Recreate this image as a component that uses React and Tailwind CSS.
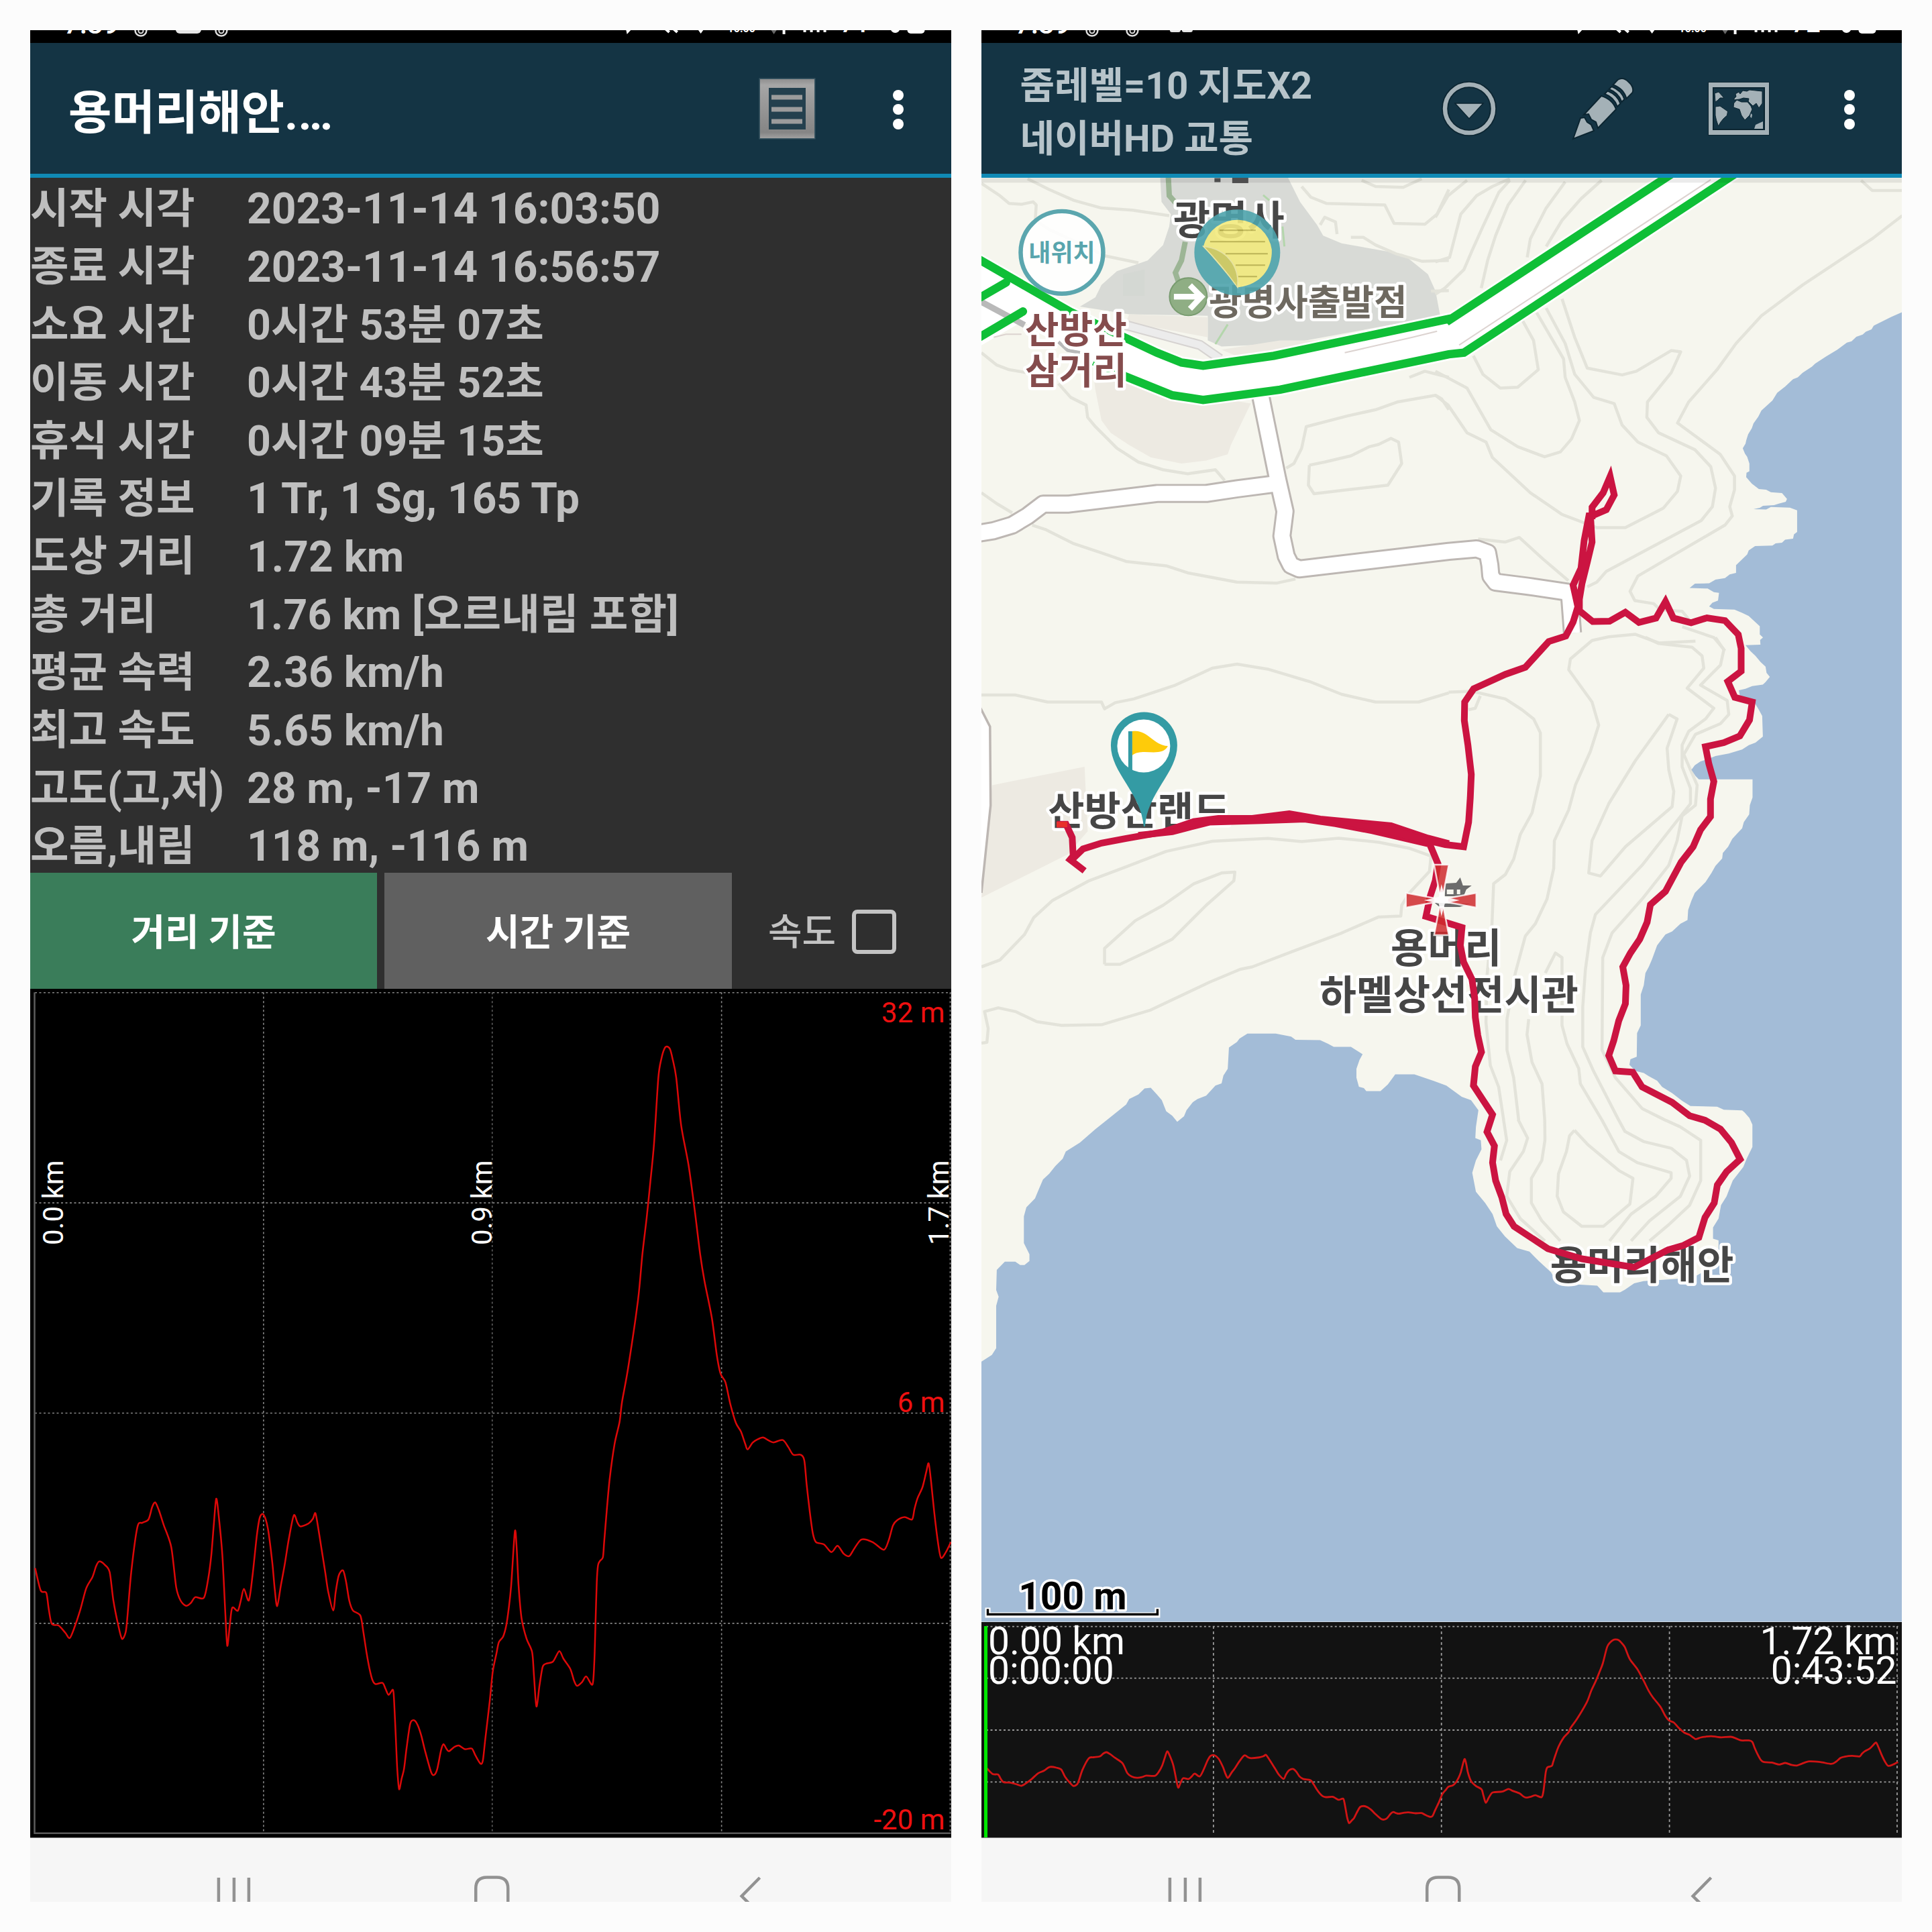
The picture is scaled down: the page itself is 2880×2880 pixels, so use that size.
import React from 'react';

const FONT = "font-['Roboto','Noto_Sans_CJK_KR',sans-serif]";

const stats = [
  { label: '시작 시각', value: '2023-11-14 16:03:50' },
  { label: '종료 시각', value: '2023-11-14 16:56:57' },
  { label: '소요 시간', value: '0시간 53분 07초' },
  { label: '이동 시간', value: '0시간 43분 52초' },
  { label: '휴식 시간', value: '0시간 09분 15초' },
  { label: '기록 정보', value: '1 Tr, 1 Sg, 165 Tp' },
  { label: '도상 거리', value: '1.72 km' },
  { label: '총 거리', value: '1.76 km [오르내림 포함]' },
  { label: '평균 속력', value: '2.36 km/h' },
  { label: '최고 속도', value: '5.65 km/h' },
  { label: '고도(고,저)', value: '28 m, -17 m' },
  { label: '오름,내림', value: '118 m, -116 m' },
];

// Elevation profile: x runs 56..1543 over the distance, y runs -1248 (32 m) to 1273 (-20 m)
const profile = `57,478 66,545 75,552 79,600 84,645 95,650 106,672 113,688 120,660 130,605 140,538 150,505 156,472 161,458
170,468 178,490 184,575 192,650 198,690 204,670 207,620 213,490 223,355 231,342 241,332 247,295 252,281 258,305 266,350
278,415 286,535 293,575 302,591 310,582 317,565 331,567 338,510 343,440 347,350 351,270 355,320 361,440 366,620 369,711
373,650 377,597 386,606 391,575 396,540 404,575 410,500 417,380 422,325 428,318 435,360 442,460 446,540 450,592 456,530
462,470 469,390 477,320 483,342 488,353 501,344 508,330 512,313 516,350 522,420 528,490 533,550 541,605 545,550 550,500
557,485 562,520 567,575 573,605 585,620 590,670 595,730 600,780 605,815 610,826 621,822 626,840 631,858 638,843 640,880
643,1000 645,1080 648,1141 652,1110 656,1080 660,1020 666,945 672,934 678,948 684,980 690,1025 700,1090 705,1098 710,1080
716,1025 720,1006 725,1020 729,1027 738,1014 745,1010 755,1021 766,1019 772,1040 780,1064 784,1055 788,990 795,880 800,790
806,735 810,700 817,683 822,650 826,600 830,530 836,368 839,420 842,530 847,630 855,690 864,730 867,800 871,893 876,830
881,775 886,765 898,758 908,727 915,750 926,780 932,815 937,831 945,820 952,803 962,827 965,760 967,640 969,520 971,470
974,457 979,445 981,400 985,310 990,210 998,105 1006,40 1010,-20 1020,-123 1036,-326 1043,-462 1050,-572 1056,-680
1062,-795 1069,-993 1074,-1050 1079,-1080 1083,-1086 1088,-1078 1092,-1050 1098,-993 1106,-850 1118,-731 1128,-596 1137,-462
1144,-382 1156,-271 1164,-160 1170,-105 1178,-79 1186,-13 1195,43 1203,68 1210,105 1214,122 1222,102 1230,92 1239,86
1248,95 1256,101 1271,94 1280,115 1288,138 1300,138 1306,155 1310,230 1315,310 1320,375 1325,400 1338,407 1350,430 1360,411
1370,435 1379,442 1387,420 1399,392 1417,400 1435,423 1443,395 1450,350 1457,334 1469,325 1481,332 1485,300 1490,268
1498,235 1504,190 1508,164 1512,220 1517,310 1523,400 1528,447 1536,430 1544,400`;

const toPairs = (str) => str.trim().split(/\s+/).map((p) => p.split(',').map(Number));

// Smooth curve through the profile points, scaled to the given box
const profilePath = (x0, x1, y0, y1) => {
  const pts = toPairs(profile).map(([x, y]) => [
    x0 + ((x - 56) / 1487) * (x1 - x0),
    y0 + ((y + 1248) / 2521) * (y1 - y0),
  ]);
  let d = `M${pts[0].join(' ')}`;
  for (let i = 0; i < pts.length - 1; i++) {
    const a = pts[i - 1] || pts[i];
    const b = pts[i];
    const c = pts[i + 1];
    const e = pts[i + 2] || c;
    d += `C${b[0] + (c[0] - a[0]) / 7} ${b[1] + (c[1] - a[1]) / 7} ${c[0] - (e[0] - b[0]) / 7} ${c[1] - (e[1] - b[1]) / 7} ${c[0]} ${c[1]}`;
  }
  return d;
};

// The map is digitised on five sheets, each with its own origin and grid
const sheets = {
  A: [1440, 250, 2.1778, 2.1778],
  B: [2140, 250, 2.1189, 2.1778],
  C: [1440, 950, 2.1778, 2.1778],
  D: [2100, 950, 2.0103, 2.1778],
  E: [1440, 1500, 1.0889, 3],
};

const at = (sheet, str) => {
  const [ox, oy, sx, sy] = sheets[sheet];
  return toPairs(str)
    .map(([x, y]) => `${(ox + x / sx).toFixed(1)},${(oy + y / sy).toFixed(1)}`)
    .join(' ');
};

const sea = [
  at('B', `1475,468 1440,484 1385,512 1378,524 1360,532 1350,541 1330,548 1315,563 1300,567 1270,590 1235,612 1200,635 1190,645 1160,665 1145,680 1130,686
    1105,710 1080,730 1065,755 1030,788 1020,808 1005,830 1000,845 988,865 982,885 980,895 971,910 978,928 985,938 992,960 992,985 983,990 982,1004
    1000,1025 1022,1043 1045,1045 1060,1053 1095,1056 1111,1075 1107,1084 1085,1090 1070,1095 1035,1097 1025,1104 1005,1108 1045,1109
    1060,1101 1120,1103 1143,1112 1143,1182 1133,1190 1130,1204 1105,1207 1095,1217 1075,1219 1065,1226 1010,1228 990,1242 985,1255 950,1290
    950,1315 930,1320 915,1332 885,1337 865,1349 820,1350 803,1364 860,1366 880,1378 896,1380 893,1405 875,1412 865,1424 880,1432
    945,1434 970,1445 990,1455 1025,1488 1025,1515 1035,1525 1026,1533 1027,1548`),
  at('D', `1010,25 1025,45 1040,60 1055,80 1070,95 1073,115 1083,128 1070,145 1062,153 1030,158 1010,167 990,172 993,190 1035,208
    1050,235 1060,255 1062,322 1040,342 1020,350 1000,364 960,377 920,385 905,392 875,403 858,415 848,430 860,450 870,461 1031,461
    1031,520 1023,545 1021,575 1005,600 1000,620 985,637 970,655 958,680 942,700 940,718 920,742 908,765 890,795 858,830 848,855
    838,885 836,918 815,930 790,955 770,965 745,1000 730,1045 720,1070 710,1090 705,1130 696,1160 696,1260 685,1285 684,1362
    665,1370 662,1388 680,1408 705,1415 720,1425 745,1440 760,1460 790,1480 820,1505 845,1522 925,1524 945,1534 1000,1536 1015,1550`),
  at('E', `1262,468 1272,500 1277,530 1277,630 1268,680 1262,720 1245,780 1235,850 1226,890 1222,950 1213,990 1213,1040 1222,1048
    1222,1150 1180,1215 1100,1230 1085,1240 1070,1268 1062,1280 1035,1280 1025,1250 960,1240 950,1190 930,1140 915,1098 895,1082
    875,1030 862,985 855,930 843,880 828,830 822,745 828,690 837,640 836,600 827,590 828,540 832,465 820,420 805,405 780,355 760,335
    728,305 697,305 685,350 673,380 650,380 646,366 638,360 634,320 634,280 639,240 644,215 625,182 597,182 588,168 575,152 535,150
    528,136 503,122 457,122 444,145 440,160 427,185 425,280 418,310 415,345 405,355 390,400 376,415 368,430 358,465 354,492 343,517
    335,490 325,470 318,420 310,395 300,365 290,368 280,395 265,415 260,440 235,495 210,550 185,610 162,650 157,682 145,715 135,750
    125,775 118,820 112,860 98,900 94,940 94,1060 103,1110 103,1140 95,1158 88,1158 80,1143 63,1143 50,1180 49,1270 53,1300 49,1340 49,1530 42,1560`),
  '1463,2030 1463,2418 2836,2418',
].join(' ');

const contours = [
  at('A', '50,50 110,90 140,115 180,118 218,110 228,120 225,170 270,200 400,260 450,285 560,308'),
  at('A', '200,35 270,70 350,105 440,130 540,137 660,155'),
  at('A', '50,600 100,640 140,655 200,665'),
  at('A', '300,700 340,745 390,770 395,810 420,840 490,910 560,955 640,980 720,993 810,980 840,1015'),
  at('A', '50,1055 100,1090 150,1120'),
  at('A', '215,1160 260,1175 350,1220 440,1250 520,1278 650,1292 720,1315 880,1345 1010,1348 1070,1335'),
  at('A', '1090,60 1120,95 1170,115 1360,120 1390,180 1490,183 1530,150 1568,70'),
  at('A', '1285,40 1330,60 1420,63 1480,35'),
  at('A', '1150,185 1165,160 1200,175 1205,215'),
  at('A', '1250,225 1290,225 1330,250 1400,280 1480,303 1568,300'),
  at('A', '1510,400 1568,398'),
  at('A', '1040,975 1065,960 1090,910 1105,840 1240,805 1330,785 1400,760 1525,738 1545,750 1568,785'),
  at('A', '1115,965 1165,955 1250,935 1310,905 1340,898 1380,878 1405,890 1415,960 1370,1030 1240,1045 1130,1058 1112,1030 1115,965'),
  at('A', '1440,680 1490,660 1568,680'),
  at('B', '0,160 40,90 100,40'),
  at('B', '0,305 45,290 60,230 80,150 130,90 180,60 235,35'),
  at('B', '0,410 30,390 90,330 115,270 150,190 200,80 235,40'),
  at('B', '145,390 165,300 190,220 230,120 285,40'),
  at('B', '290,290 300,230 350,130 410,45'),
  at('B', '350,255 400,170 460,100 525,40'),
  at('B', '1345,40 1380,73 1475,73'),
  at('B', `1475,155 1380,230 1160,380 1030,480 950,570 890,655 800,760 765,828 900,930 945,1000 945,1045 930,1100 938,1130
    915,1160 640,1325 615,1375 630,1405 690,1415 710,1435 780,1440 800,1465`),
  at('B', `400,425 440,550 480,650 590,672 635,660 745,593 775,597 745,665 670,760 668,810 705,860 820,915 870,970 885,1040
    875,1100 840,1145 540,1310 510,1345 480,1360`),
  at('B', `350,455 410,570 440,670 500,745 565,765 590,835 640,890 730,935 775,1000 765,1050 720,1105 600,1168 510,1168
    400,1125 300,1055 180,940 160,890 100,860 40,770 0,738`),
  at('B', '0,660 100,715 175,850 260,905 345,938 395,922 430,880 455,820 440,760 410,680 405,620 320,470'),
  at('B', '275,495 310,560 325,655 260,712 205,715 150,670 120,610'),
  at('B', '135,1205 220,1215 265,1200 340,1270 420,1340'),
  at('B', '780,1490 880,1525 915,1568'),
  at('C', `50,187 160,187 265,210 440,210 450,232 485,212 545,200 680,155 800,100 880,87 980,103 1120,145 1220,185 1330,210
    1470,210 1568,180`),
  at('C', `50,1070 110,1048 190,965 220,910 280,855 400,790 520,745 650,695 800,662 980,653 1090,663 1210,652 1340,665 1440,685
    1510,710 1505,760 1440,830 1415,870 1412,905 1340,908 1220,960 1060,1020 930,1070 890,1078 790,1120 600,1210 440,1258
    310,1260 230,1248 160,1215 105,1203 60,1215 72,1270 68,1315 50,1318`),
  at('C', '450,1062 450,1010 550,920 640,870 740,800 830,765 873,762 870,790 780,870 670,980 600,1015 500,1062 450,1062'),
  at('D', `120,178 190,175 290,200 340,235 375,265 395,310 395,450 370,570 335,640 315,720 290,770 255,800 250,930 235,1100
    232,1250 245,1390 270,1460 285,1568`) + ' ' + at('E', '873,510 878,600 868,690'),
  at('D', `860,12 750,18 680,-10 600,-2 550,10 485,70 480,105 550,210 570,285 545,370 500,480 480,560 437,660 435,750 415,850 380,930 350,970
    320,1090 295,1240 295,1340 315,1430 330,1568`) + ' ' + at('E', '897,510 912,590 905,650 883,740 878,850 900,950 940,1050'),
  at('D', `710,0 750,20 850,32 880,60 885,100 835,165 915,230 890,265 840,305 820,350 820,420 845,490 845,540 700,740 560,900
    545,960 530,1080 522,1200 522,1330 555,1410 630,1568`) + ' ' + at('E', '1060,510 1070,560 1100,605 1145,635 1170,690 1175,760 1160,850 1110,960 1080,1050'),
  at('D', `920,0 945,40 935,90 875,155 955,205 960,250 935,280 860,315 825,380 865,480 860,545 820,580 805,660 780,740 700,850
    610,960 582,1040 580,1340 620,1430 700,1530 770,1568`) + ' ' + at('E', '1136,510 1160,540 1193,600 1193,780 1175,890 1140,980 1110,1050'),
  at('D', '780,250 805,265 775,360 780,430 795,500 790,550 650,680 575,775 540,765 550,660 600,540 680,400 780,250'),
  at('D', '410,1090 440,1025 460,1040 460,1260 475,1320 510,1400 515,1450 580,1568') + ' ' + at('E', '1060,650 1090,700 1145,745 1145,770 1120,850 1080,930 1045,1050'),
  at('D', '360,1240 355,1290 370,1380 400,1450 408,1568') + ' ' + at('E', '940,600 935,690 918,770 918,880 935,960 965,1050'),
  at('D', '180,235 200,230 215,190'),
  at('E', '988,555 1010,620 1060,735 1083,770 1078,885 1035,985 1000,985 970,920 960,850 962,750 975,650 980,580 988,555'),
];

const track = [
  at('C', '295,607 325,607 345,650 348,710 338,722 385,758'),
  at('C', '348,718 380,687 440,668 520,653 640,632 740,598 820,588 930,588 1050,573 1150,590 1380,612 1500,652 1568,670'),
  at('C', '560,643 670,631 790,600 960,595 1100,590 1200,605 1320,628 1500,670'),
  [
    at('D', '-30,645 0,637 60,660 110,673 165,680 180,600 185,520 188,445 178,350 167,270 168,210 195,167 290,120 350,97'),
    at('B', `358,1538 412,1520 435,1475 450,1425 435,1355 460,1300 470,1210 485,1130 495,1130 495,1102 530,1055 552,1002 565,1062 540,1110
      490,1132 495,1215 480,1280 463,1350 455,1400 455,1438 497,1473 550,1472 600,1443 643,1476 697,1462 727,1408 752,1462
      808,1477 858,1461 915,1470 957,1515 966,1560`),
    at('D', `997,50 997,110 957,143 978,195 1030,210 1022,268 993,320 945,342 890,355 900,410 915,468 905,525 905,582 875,625
      853,680 817,730 770,825 725,868 715,925 693,980 665,1025 642,1070 652,1130 650,1190 630,1245 615,1310 600,1358
      620,1408 672,1412 700,1460 790,1510`),
    at('E', `1175,490 1200,510 1225,550 1243,610 1257,685 1235,740 1220,800 1215,880 1200,945 1190,1035 1165,1070 1140,1090
      1085,1168 1000,1130 945,1085 890,985 877,930 870,855 860,780 855,700 858,625 846,562 855,485 824,355 827,270 837,205 831,130 827,50`),
    at('D', '198,1170 190,1110 165,1055 155,1000 160,942 52,906 65,840 80,790 88,735 62,668'),
  ].join(' '),
];

// Out and back legs run side by side here
const trackOverlap = at('C', `560,643 640,632 740,598 820,588 930,588 1050,573 1150,590 1380,612 1500,652 1500,670 1320,628 1200,605
  1100,590 960,595 790,600 670,631`);

const roads = [
  at('A', '957,740 1012,1010 1036,1115 1026,1195 1040,1260 1055,1290 1082,1302 1568,1245') +
    ' ' +
    at('B', '130,1237 165,1250 172,1290 175,1325 190,1345 290,1358 420,1378 425,1400 433,1510'),
  at('A', '1012,1025 880,1042 780,1057 620,1057 330,1092 250,1092 200,1130 150,1160 90,1178 30,1188'),
];

const greenTop = at('A', '30,290 340,468 520,553 620,600 700,632 770,642 1000,610 1568,490') + ' ' + at('B', '45,493 775,0');
const greenBottom = at('A', '415,628 520,678 670,738 770,753 1020,720 1568,605') + ' ' + at('B', '90,600 975,0');
const highway =
  at('A', '30,290 340,468 520,553 620,600 700,632 770,642 1000,610 1568,490') +
  ' ' +
  at('B', '45,493 775,0 975,0 90,600') +
  ' ' +
  at('A', '1568,605 1020,720 770,753 670,738 520,678 415,628 185,475 30,565');

const RingIcon = ({ x }) => (
  <g fill="none" stroke="#ddd">
    <circle cx={x} cy="0" r="8.500" strokeWidth="2.500" />
    <circle cx={x} cy="1" r="3.500" strokeWidth="2" />
  </g>
);

const StatusBar = ({ percent, children }) => (
  <svg className="h-[19px] w-full shrink-0 bg-black" viewBox="0 0 1373 19" fill="#fff" fontFamily="Roboto">
    <text x="50" y="4.500" fontSize="42" fontWeight="500">7:39</text>
    {children}
    <path d="M888 -3l2 9 10-11z" />
    <path d="M945 -4l8 7M957 -4l8 7" stroke="#fff" strokeWidth="4" />
    <path d="M992 -6l8 11 8-11z" />
    <text x="1040" y="3" fontSize="16" fontWeight="700">10.00</text>
    <path d="M1101 -6l8 12 8-12z" fill="#666" />
    <path d="M1124 -6v12M1155 -6v9M1165 -6v9M1175 -6v9M1185 -6v9" stroke="#fff" strokeWidth="4" />
    <text x="1208" y="3" fontSize="38" fontWeight="500">{percent}</text>
    <circle cx="1290" cy="-3" r="7" />
    <rect x="1308" y="-10" width="26" height="15" rx="5" />
  </svg>
);

const MoreDots = () => (
  <div className="flex w-4 flex-col gap-[5.5px]">
    <span className="h-4 w-4 rounded-full bg-white" />
    <span className="h-4 w-4 rounded-full bg-white" />
    <span className="h-4 w-4 rounded-full bg-white" />
  </div>
);

const NavBar = () => (
  <svg className="w-full flex-1 border-t border-[#888] bg-[#f6f6f6]" viewBox="0 2739 1373 96" preserveAspectRatio="xMidYMin slice" fill="none" stroke="#929292" strokeWidth="4.5">
    <path d="M281 2798v50M304 2798v50M326 2798v50" />
    <path d="M664.500 2850v-36q0 -16.500 16.500 -16.500h15q16.500 0 16.500 16.500v36" />
    <path d="M1088 2798l-27 27.500 24 24" />
  </svg>
);

const ListIcon = () => (
  <svg width="85" height="92" viewBox="0 0 85 92">
    <defs>
      <linearGradient id="frame" x1="0" y1="0" x2="0" y2="1">
        <stop offset="0" stopColor="#8f8f8f" />
        <stop offset="0.1" stopColor="#a6a6a6" />
        <stop offset="0.9" stopColor="#858585" />
        <stop offset="1" stopColor="#a0a0a0" />
      </linearGradient>
    </defs>
    <rect x="0.500" y="0.500" width="84" height="91" fill="#3a5663" />
    <rect x="2" y="2" width="81" height="88" fill="url(#frame)" />
    <rect x="15" y="15" width="55" height="62" fill="#24404e" />
    <path d="M19 29h46M19 47h46M19 65h46" stroke="#9c9c9c" strokeWidth="7" />
  </svg>
);

const DropIcon = () => (
  <svg width="82" height="82" viewBox="0 0 82 82">
    <circle cx="41" cy="41" r="36" fill="none" stroke="#0c2531" strokeWidth="10" />
    <circle cx="41" cy="41" r="36" fill="none" stroke="#a4b1b7" strokeWidth="6.500" />
    <path d="M20 33h42l-21 23z" fill="#a4b1b7" stroke="#0c2531" strokeWidth="1.500" />
  </svg>
);

const PencilIcon = () => (
  <svg width="96" height="98" viewBox="-1 -1 96 98" fill="#a4b1b7" stroke="#0c2531" strokeWidth="2">
    <path d="M3 93L14 62l6 -1 4 7 6 4 4 9z" />
    <path d="M19 57L45 29q17 5 22 20L40 77l-3 -9 -7 -4 -4 -8z" />
    <path d="M50 26l4.500 -4.500q15 6 19 19l-4.500 4.500q-5 -14 -19 -19z" />
    <path d="M56.500 19l4 -4q15 6 19 19l-4 4q-5 -14 -19 -19z" />
    <path d="M62.500 12.500l7 -7.500q8 -5 16 3 9 8 6 16l-9 9q-4 -15 -20 -20.500z" />
  </svg>
);

const WorldIcon = () => (
  <svg width="92" height="80" viewBox="-1 -1 92 80" fill="#a4b1b7">
    <rect x="-1" y="-1" width="92" height="80" fill="#0c2531" />
    <rect width="90" height="78" />
    <rect x="6" y="7" width="78" height="64" fill="#0c2531" />
    <rect x="8" y="9" width="74" height="60" fill="#143444" />
    <path d="M10 29L9 16l6 -2 8 9 -6 0 -4 4zM10 36l7 -1 11.500 8 -1 6 -5.500 5 -4 5 -3.500 6 -3 -9 -1.500 -7z" stroke="#0c2531" />
    <path d="M37.500 31l4.500 -5 7 3h9l5 6 2 5 -4 9 -7 7 -5 -7 -3 -9 -9 -3z" stroke="#0c2531" />
    <path d="M38 24l3 -3 -1 -4 5 -3 2 3 4 -5 6 1 4 -2 19 2v18l-5 7 -4 -7 -5 4 -7 -7 1 -4 -8 -1 -6 2 -8 1z" stroke="#0c2531" />
    <path d="M81 58v11H68l2 -6zM63 46l2 2 -1 5 -2 -2z" />
  </svg>
);

const ElevationChart = () => (
  <svg className="h-[1265px] w-full shrink-0 bg-black" viewBox="45 1474 1373 1265" fontFamily="Roboto">
    <g stroke="#858585" strokeWidth="1.600" strokeDasharray="3 3.500">
      <path d="M52 1479.500H1418M52 1793H1418M52 2106.500H1418M52 2420H1418" />
      <path d="M393 1479V2733M1076 1479V2733M1417 1479V2733" />
      <path d="M734 1479V2733" stroke="#5e5e5e" />
    </g>
    <path d="M51.500 1479V2733H1418" fill="none" stroke="#5c5c5c" strokeWidth="2.500" />
    <path d={profilePath(51.5, 1417, 1479.3, 2733)} fill="none" stroke="#dc0808" strokeWidth="2.500" strokeLinejoin="round" />
    <g fill="#ee1010" fontSize="42" textAnchor="end">
      <text x="1409" y="1524">32 m</text>
      <text x="1409" y="2105">6 m</text>
      <text x="1409" y="2727">-20 m</text>
    </g>
    <g fill="#fff" fontSize="42">
      <text transform="translate(94 1856) rotate(-90)">0.0 km</text>
      <text transform="translate(733 1856) rotate(-90)">0.9 km</text>
      <text transform="translate(1414 1856) rotate(-90)">1.7 km</text>
    </g>
  </svg>
);

const MiniChart = () => (
  <svg className="h-[321px] w-full shrink-0 bg-[#121212]" viewBox="1463 2418 1373 321" fontFamily="Roboto">
    <path d="M1470 2424.500H2830M1470 2501.500H2830M1470 2579H2830M1470 2656.500H2830" stroke="#9a9a9a" strokeWidth="1.800" strokeDasharray="3 3.500" />
    <path d="M1809 2424V2734M2149 2424V2734M2489 2424V2734M2828.500 2424V2734" stroke="#9a9a9a" strokeWidth="1.800" strokeDasharray="4 4" />
    <path d={profilePath(1470.5, 2829, 2424, 2734)} fill="none" stroke="#d01414" strokeWidth="2.800" strokeLinejoin="round" />
    <path d="M1469.500 2424V2739" stroke="#00e600" strokeWidth="5" />
    <g fill="#fff" fontSize="57">
      <text x="1473" y="2466">0.00 km</text>
      <text x="1473" y="2510">0:00:00</text>
      <text x="2828" y="2466" textAnchor="end">1.72 km</text>
      <text x="2828" y="2510" textAnchor="end">0:43:52</text>
    </g>
  </svg>
);

const TrackMap = () => (
  <svg className="h-[2153px] w-full shrink-0 bg-[#f6f6ee]" viewBox="1463 265 1373 2153" fontFamily="'Roboto','Noto Sans CJK KR',sans-serif">
    {/* Land use */}
    <polygon
      fill="#d8dad6"
      points={at('A', `630,20 1040,20 1085,110 1140,185 1160,220 1220,245 1420,280 1500,345 1525,400 1540,480 1050,570 830,580 785,560 785,480
        530,475 370,450 420,420 440,380 490,335 590,300 640,250 660,190 665,150 635,110`)}
    />
    <polygon fill="#d0d4d0" points={at('A', '510,345 580,330 580,415 510,415')} opacity="0.4" />
    <polygon fill="#edeae2" points={at('A', '415,680 420,720 440,820 470,860 530,900 600,940 700,960 780,950 850,930 860,900 925,765')} />
    <polygon fill="#edeae2" points={at('A', '530,475 785,485 785,550 520,500')} />
    <polygon fill="#edeae2" points={at('A', '830,590 1020,560 1200,560 900,620')} />
    <polygon fill="#edeae2" points={at('C', '85,480 385,420 395,630 330,705 50,845 78,545')} />

    <g fill="none" stroke="#e3e3da" strokeWidth="4.500" strokeLinejoin="round">
      {contours.map((points, idx) => (
        <polyline key={idx} points={points} />
      ))}
    </g>

    <polygon points={sea} fill="#a3bcd7" />

    {/* Footpaths */}
    <g fill="none" stroke="#9cb595" strokeWidth="8">
      <polyline points={at('A', '657,30 660,90 682,115')} />
      <polyline points={at('A', '712,240 700,300 680,340 690,370')} />
    </g>
    <g fill="none" stroke="#b4d6ac" strokeWidth="3">
      <polyline points={at('A', '850,508 810,572')} />
      <polyline points={at('A', '965,88 985,105')} />
      <polyline points={at('A', '1028,190 1034,255')} />
    </g>
    <polyline points={at('A', '500,505 760,575 825,620')} fill="none" stroke="#d6d3d1" strokeWidth="15" />
    <polyline points={at('A', '500,505 760,575 825,620')} fill="none" stroke="#ececec" strokeWidth="11" />

    {/* Roads */}
    <polyline points={at('C', '30,200 50,235 78,290 80,545 50,830')} fill="#fff" stroke="#bdb7b3" strokeWidth="3.500" />
    <g fill="none" stroke="#bdb7b3" strokeWidth="28.500" strokeLinejoin="round">
      {roads.map((points, idx) => (
        <polyline key={idx} points={points} />
      ))}
    </g>
    <g fill="none" stroke="#fff" strokeWidth="22.500" strokeLinejoin="round">
      {roads.map((points, idx) => (
        <polyline key={idx} points={points} />
      ))}
    </g>
    <polygon points={highway} fill="#fff" stroke="#fff" strokeWidth="18" strokeLinejoin="round" />
    <g fill="none" stroke="#b9b9b9" strokeWidth="9">
      <polyline points={at('A', '50,435 190,510')} />
      <polyline points={at('A', '300,565 330,592 370,600')} strokeWidth="5" />
    </g>
    <g fill="none" stroke="#dcd3d0" strokeWidth="2">
      <polyline points={at('B', '75,575 870,38')} />
      <polyline points={at('A', '1230,600 1450,550 1530,530')} />
      <polyline points={at('A', '90,550 130,540 180,540')} />
    </g>
    <g fill="none" stroke="#0fbf37" strokeWidth="12.500">
      <polyline points={greenTop} />
      <polyline points={greenBottom} />
      <polyline points={at('A', '30,430 130,372')} strokeLinecap="round" />
      <polyline points={at('A', '30,558 185,466')} strokeLinecap="round" />
    </g>

    <circle cx="1771.500" cy="442" r="28" fill="#8fae84" stroke="#789b6f" strokeWidth="2" />
    <path d="M1750 442h37M1774 425l17 17 -17 18" fill="none" stroke="#fff" strokeWidth="8.500" />

    {/* Ship of the Hamel exhibition hall */}
    <path d="M2155 1317l16 -1 6 -8 4 12 13 0 -8 6 -4 10 -28 0zM2138 1345l22 2h32l-16 5h-30z" fill="#6c6c6c" />
    <path d="M2157 1326h10v7h-10zM2172 1326h5v7h-5z" fill="#f6f6ee" />

    {/* Place names */}
    <g textAnchor="middle" fontWeight="700" stroke="#fff" strokeWidth="9" strokeLinejoin="round" paintOrder="stroke">
      <path d="M1815 265v6M1837 268h24" fill="none" stroke="#555" />
      <g fill="#464646" fontSize="60">
        <text x="1832" y="350">광명사</text>
        <text x="1698" y="1230" fontSize="59">산방산랜드</text>
        <text x="2156" y="1435">용머리</text>
        <text x="2160" y="1505">하멜상선전시관</text>
        <text x="2448" y="1907" fontSize="59.500">용머리해안</text>
      </g>
      <text x="1950" y="470" fontSize="53.500" fill="#6e6960">광명사출발점</text>
      <g fill="#854c4d" fontSize="55">
        <text x="1604" y="511">산방산</text>
        <text x="1604" y="572">삼거리</text>
      </g>
    </g>

    {/* Flag pin */}
    <path d="M1705 1232C1701 1182 1656 1152 1656 1111a49.500 49.500 0 0 1 99 0C1755 1152 1710 1182 1707 1232z" fill="#349ba4" />
    <circle cx="1705" cy="1112" r="39.500" fill="#fff" />
    <path d="M1685 1090v60" stroke="#349ba4" strokeWidth="6" />
    <path d="M1688 1090c22 -4 30 20 53 22 -8 18 -40 2 -53 14z" fill="#fecb0a" />

    <g fill="none" stroke="#cb1441" strokeWidth="10" strokeLinejoin="miter">
      {track.map((points, idx) => (
        <polyline key={idx} points={points} />
      ))}
    </g>
    <polygon points={trackOverlap} fill="#cb1441" />
    <rect x="1575" y="1225" width="16" height="8" fill="#e8302c" />

    {/* Centre crosshair */}
    <g fill="#cf2a2e" fillOpacity="0.850" stroke="#fff" strokeOpacity="0.800" strokeWidth="2.500">
      <path d="M2138 1289h22l-8 42h-6zM2138 1394h22l-8 -42h-6zM2096 1331v22l43 -8v-6zM2201 1331v22l-43 -8v-6z" />
    </g>
    <path d="M2149 1318l5 19 22 5 -22 5 -5 19 -4 -19 -22 -5 22 -5z" fill="#fff" opacity="0.900" />

    {/* Floating buttons */}
    <circle cx="1583" cy="376" r="61.500" fill="#fff" fillOpacity="0.880" stroke="#5ba6ae" strokeWidth="6.500" />
    <text x="1583" y="390" textAnchor="middle" fontSize="36" fontWeight="700" fill="#58a5ad">내위치</text>
    <g opacity="0.900">
      <circle cx="1844.500" cy="376" r="64" fill="#4ea4ac" />
      <path d="M1794 367a52 52 0 0 1 102 5c1 28 -16 52 -50 56z" fill="#f2ea7e" />
      <path d="M1794 367c34 4 54 28 51 61q-26 -36 -51 -61z" fill="#cbc85d" stroke="#e9e4a0" strokeWidth="1.500" />
      <path d="M1818 343h54M1804 360h82M1827 378h63M1842 395h44M1846 412h28" stroke="#b9b04a" strokeWidth="2" />
    </g>

    {/* Scale bar */}
    <path d="M1472.500 2397v11h253v-11" fill="none" stroke="#fff" strokeWidth="8" />
    <path d="M1472.500 2399v8h253v-8" fill="none" stroke="#000" strokeWidth="3.500" />
    <text x="1599" y="2399" textAnchor="middle" fontSize="57" fontWeight="700" stroke="#fff" strokeWidth="7" strokeLinejoin="round" paintOrder="stroke">100 m</text>

    <rect x="1463" y="265" width="1373" height="7" fill="#000" opacity="0.080" />
  </svg>
);

const hasHangul = (str) => /[가-힣]/.test(str);

const App = () => {
  return (
    <div className={`flex h-[2880px] w-[2880px] gap-[45px] bg-[#fcfcfc] p-[45px] ${FONT}`}>
      {/* Track statistics */}
      <div className="flex h-[2790px] w-[1373px] flex-col overflow-hidden bg-[#2f2f2f]">
        <StatusBar percent="71">
          <RingIcon x={165} />
          <rect x="217" y="-15" width="38" height="20" rx="6" fill="#e5e5e5" />
          <RingIcon x={285} />
        </StatusBar>
        <div className="flex h-[201px] shrink-0 items-center border-b-[6px] border-[#108ab5] bg-[#143444] pr-[71px] pl-[57px]">
          <h1 className="flex-1 pt-[15px] text-[70px] leading-none font-bold text-white">용머리해안.…</h1>
          <ListIcon />
          <div className="ml-[115px] pt-[3px]"><MoreDots /></div>
        </div>

        <div className="h-[1036px] shrink-0 pt-[4px] text-[62.5px] leading-none font-bold text-[#bfbfbf]">
          {stats.map((row) => (
            <div key={row.label} className="flex h-[86.4px] items-center whitespace-nowrap">
              <span className="w-[323px] shrink-0">{row.label}</span>
              <span className={hasHangul(row.value) ? 'tracking-[0.25px]' : 'text-[64px]'}>{row.value}</span>
            </div>
          ))}
        </div>

        <div className="flex h-[173px] shrink-0 items-stretch text-[55px] leading-none font-bold">
          <button className="w-[517px] bg-[#3a7d5a] pt-[6px] text-white">거리 기준</button>
          <button className="ml-[11px] w-[518px] bg-[#606060] pt-[6px] text-white">시간 기준</button>
          <label className="ml-[54px] flex items-center pt-[3px] text-[#c3c3c3]">
            <span className="font-medium">속도</span>
            <span className="ml-[24px] h-[66px] w-[66px] rounded-lg border-[6px] border-[#c3c3c3]" />
          </label>
        </div>

        <ElevationChart />
        <NavBar />
      </div>

      {/* Map */}
      <div className="flex h-[2790px] w-[1373px] flex-col overflow-hidden bg-[#f6f6ee]">
        <StatusBar percent="72">
          <RingIcon x={165} />
          <RingIcon x={225} />
          <rect x="281" y="-15" width="16" height="18" rx="3" fill="#e5e5e5" />
          <rect x="299" y="-15" width="16" height="18" rx="3" fill="#e5e5e5" />
        </StatusBar>
        <div className="flex h-[201px] shrink-0 items-center border-b-[6px] border-[#108ab5] bg-[#143444] pr-[70px] pl-[58px]">
          <div className="flex-1 pt-[13px] text-[56px] leading-[79px] font-bold text-[#b7c4ca]">
            <div>줌레벨=10 지도X2</div>
            <div>네이버HD 교통</div>
          </div>
          <DropIcon />
          <div className="ml-[110px]"><PencilIcon /></div>
          <div className="ml-[109px]"><WorldIcon /></div>
          <div className="ml-[111px] pt-[3px]"><MoreDots /></div>
        </div>

        <TrackMap />
        <MiniChart />
        <NavBar />
      </div>
    </div>
  );
};

export default App;
